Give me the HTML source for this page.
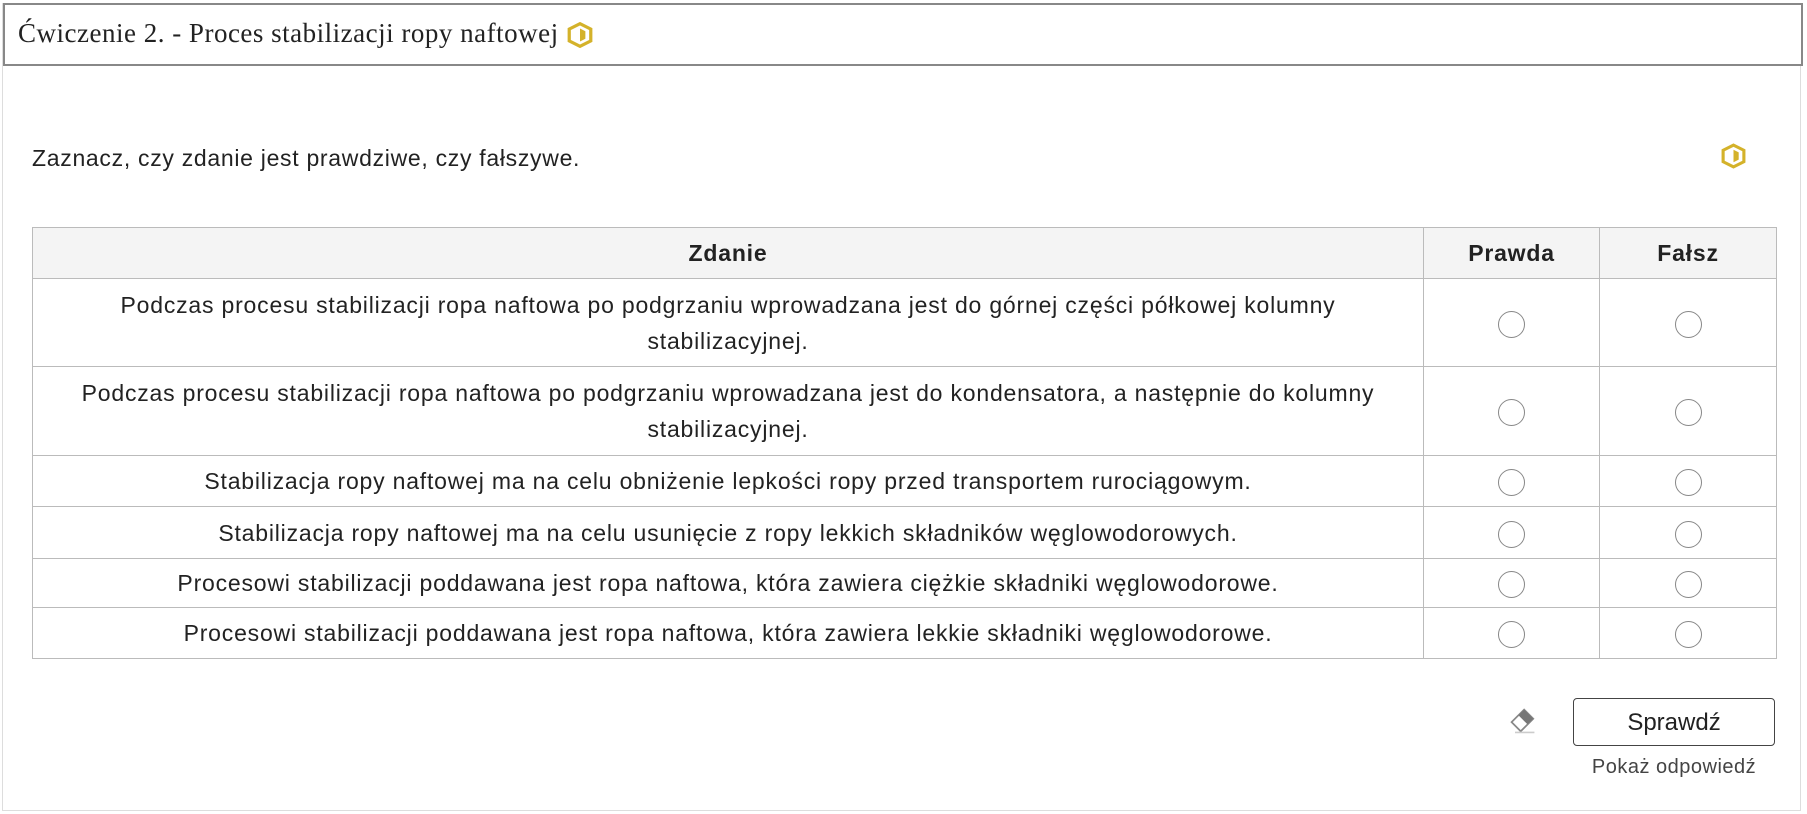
<!DOCTYPE html>
<html><head><meta charset="utf-8"><style>
*{box-sizing:border-box;margin:0;padding:0}
body{width:1807px;height:814px;background:#fff;font-family:"Liberation Sans",sans-serif;color:#222;position:relative;overflow:hidden}
.outer{position:absolute;left:2px;top:3px;width:1799px;height:808px;border:1px solid #ddd}
.title{position:absolute;left:3px;top:3px;width:1800px;height:63px;border:2px solid #888;background:#fff}
.title span{position:absolute;left:13px;top:13px;font-family:"Liberation Serif",serif;font-size:27px;letter-spacing:0.5px;color:#222}
.hex{position:absolute}
.instr{position:absolute;left:32px;top:145px;font-size:23px;letter-spacing:0.7px;color:#222}
table{position:absolute;left:32px;top:227px;width:1745px;border-collapse:collapse;font-size:23px;letter-spacing:0.8px}
td,th{border:1px solid #bbb;text-align:center;color:#222}
th{background:#f4f4f4;height:51px;font-weight:bold;font-size:23px}
td{line-height:36px}
td.q{padding:0 36px}
.r{display:inline-block;width:27px;height:27px;border:1px solid #888;border-radius:50%;vertical-align:middle}
.btn{position:absolute;left:1573px;top:698px;width:202px;height:48px;border:1px solid #444;border-radius:4px;font-size:24px;text-align:center;line-height:48px;color:#222}
.show{position:absolute;left:1554px;top:756px;width:240px;text-align:center;font-size:20px;letter-spacing:0.5px;color:#444}
</style></head><body>
<div class="outer"></div>
<div class="title"><span>Ćwiczenie 2. - Proces stabilizacji ropy naftowej</span></div>
<svg class="hex" style="left:566px;top:22px" width="28" height="26" viewBox="0 0 26 24"><polygon points="13,1.5 23,6.5 23,17.5 13,22.5 3,17.5 3,6.5" fill="none" stroke="#d4b22a" stroke-width="3"/><path d="M13 6 L18 8.5 L18 15.5 L13 18Z" fill="#d4b22a"/></svg>
<div class="instr">Zaznacz, czy zdanie jest prawdziwe, czy fałszywe.</div>
<svg class="hex" style="left:1720px;top:143px" width="27" height="26" viewBox="0 0 26 24"><polygon points="13,1.5 23,6.5 23,17.5 13,22.5 3,17.5 3,6.5" fill="none" stroke="#d4b22a" stroke-width="3"/><path d="M13 6 L18 8.5 L18 15.5 L13 18Z" fill="#d4b22a"/></svg>
<table>
<colgroup><col style="width:1391px"><col style="width:176px"><col style="width:177px"></colgroup>
<tr><th>Zdanie</th><th>Prawda</th><th>Fałsz</th></tr>
<tr style="height:88px"><td class="q">Podczas procesu stabilizacji ropa naftowa po podgrzaniu wprowadzana jest do górnej części półkowej kolumny stabilizacyjnej.</td><td><span class="r"></span></td><td><span class="r"></span></td></tr>
<tr style="height:89px"><td class="q">Podczas procesu stabilizacji ropa naftowa po podgrzaniu wprowadzana jest do kondensatora, a następnie do kolumny stabilizacyjnej.</td><td><span class="r"></span></td><td><span class="r"></span></td></tr>
<tr style="height:51px"><td class="q">Stabilizacja ropy naftowej ma na celu obniżenie lepkości ropy przed transportem rurociągowym.</td><td><span class="r"></span></td><td><span class="r"></span></td></tr>
<tr style="height:52px"><td class="q">Stabilizacja ropy naftowej ma na celu usunięcie z ropy lekkich składników węglowodorowych.</td><td><span class="r"></span></td><td><span class="r"></span></td></tr>
<tr style="height:49px"><td class="q">Procesowi stabilizacji poddawana jest ropa naftowa, która zawiera ciężkie składniki węglowodorowe.</td><td><span class="r"></span></td><td><span class="r"></span></td></tr>
<tr style="height:51px"><td class="q">Procesowi stabilizacji poddawana jest ropa naftowa, która zawiera lekkie składniki węglowodorowe.</td><td><span class="r"></span></td><td><span class="r"></span></td></tr>
</table>
<svg class="hex" style="left:1507px;top:706px" width="32" height="30" viewBox="0 0 28 26"><path d="M15 3 L23 11 L12 22 L4 14Z" fill="#fff" stroke="#888" stroke-width="1.5"/><path d="M15 3 L23 11 L18 16 L10 8Z" fill="#777"/><line x1="7" y1="23" x2="24" y2="23" stroke="#ccc" stroke-width="1.5"/></svg>
<div class="btn">Sprawdź</div>
<div class="show">Pokaż odpowiedź</div>
</body></html>
